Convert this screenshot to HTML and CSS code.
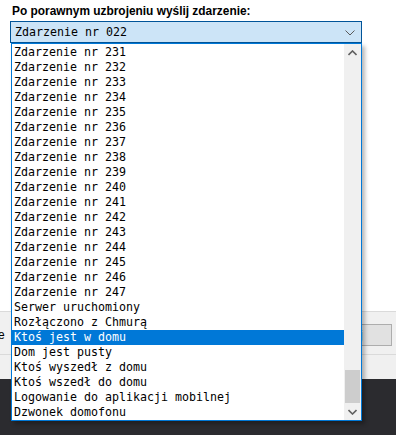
FILE: index.html
```html
<!DOCTYPE html>
<html lang="pl">
<head>
<meta charset="utf-8">
<title>Zdarzenie</title>
<link rel="stylesheet" href="styles.css">
</head>
<body>
<div class="page">
  <div class="form">
    <div class="title">Po porawnym uzbrojeniu wyślij zdarzenie:</div>
    <div class="combo">
      <div class="select">
        <span class="value">Zdarzenie nr 022</span>
        <svg class="chev" width="10" height="6" viewBox="0 0 10 6"><path d="M0.5 0.5 L5 5 L9.5 0.5" fill="none" stroke="#5a5a5a" stroke-width="1"/></svg>
      </div>
      <div class="dropdown">
        <ul class="options">
          <li>Zdarzenie nr 231</li>
          <li>Zdarzenie nr 232</li>
          <li>Zdarzenie nr 233</li>
          <li>Zdarzenie nr 234</li>
          <li>Zdarzenie nr 235</li>
          <li>Zdarzenie nr 236</li>
          <li>Zdarzenie nr 237</li>
          <li>Zdarzenie nr 238</li>
          <li>Zdarzenie nr 239</li>
          <li>Zdarzenie nr 240</li>
          <li>Zdarzenie nr 241</li>
          <li>Zdarzenie nr 242</li>
          <li>Zdarzenie nr 243</li>
          <li>Zdarzenie nr 244</li>
          <li>Zdarzenie nr 245</li>
          <li>Zdarzenie nr 246</li>
          <li>Zdarzenie nr 247</li>
          <li>Serwer uruchomiony</li>
          <li>Rozłączono z Chmurą</li>
          <li class="selected">Ktoś jest w domu</li>
          <li>Dom jest pusty</li>
          <li>Ktoś wyszedł z domu</li>
          <li>Ktoś wszedł do domu</li>
          <li>Logowanie do aplikacji mobilnej</li>
          <li>Dzwonek domofonu</li>
        </ul>
        <div class="scrollbar">
          <div class="sb-btn">
            <svg width="9" height="6" viewBox="0 0 9 6"><path d="M0.5 5 L4.5 1 L8.5 5" fill="none" stroke="#606060" stroke-width="1.6"/></svg>
          </div>
          <div class="sb-track"><div class="sb-thumb"></div></div>
          <div class="sb-btn">
            <svg width="9" height="6" viewBox="0 0 9 6"><path d="M0.5 1 L4.5 5 L8.5 1" fill="none" stroke="#606060" stroke-width="1.6"/></svg>
          </div>
        </div>
      </div>
    </div>
  </div>
  <div class="footer">
    <div class="footer-row">
      <span class="footer-label">Zapisz zmiany w strefie</span>
      <button class="btn">Anuluj</button>
    </div>
    <div class="footer-line"></div>
  </div>
  <div class="taskbar"></div>
</div>
</body>
</html>
```
FILE: styles.css
```css
* { box-sizing: border-box; }
html, body { margin: 0; padding: 0; }
body {
  width: 396px;
  height: 435px;
  overflow: hidden;
  background: #ffffff;
  font-family: "Liberation Sans", Arial, sans-serif;
}
.page {
  display: flex;
  flex-direction: column;
  height: 435px;
}
.form {
  height: 311px;
  padding: 4px 35px 0 10px;
  background: #ffffff;
}
.title {
  font-weight: bold;
  font-size: 11.9px;
  line-height: 14px;
  padding-left: 2px;
  color: #000;
  height: 17px;
}
.combo {
  position: relative;
  width: 352px;
}
.select {
  height: 22px;
  border: 1px solid #005499;
  background: #cce4f7;
  display: flex;
  align-items: center;
  justify-content: space-between;
  padding: 0 6px 0 4px;
}
.value, .options li {
  font-family: "DejaVu Sans Mono", "Liberation Mono", monospace;
  font-size: 11.63px;
  color: #000;
}
.chev { display: block; margin-top: 1px; }
.dropdown {
  position: absolute;
  left: 1px;
  top: 22px;
  width: 351px;
  height: 378px;
  border: 1px solid #0078d7;
  background: #fff;
  display: flex;
  box-shadow: 3px 3px 4px rgba(0, 0, 0, 0.28);
  z-index: 5;
}
.options {
  list-style: none;
  margin: 0;
  padding: 1px 0 0 0;
  flex: 1;
}
.options li {
  height: 15px;
  line-height: 15px;
  padding-left: 2px;
  white-space: nowrap;
}
.options li.selected {
  background: #0078d7;
  color: #fff;
}
.scrollbar {
  width: 17px;
  background: #f0f0f0;
  display: flex;
  flex-direction: column;
}
.sb-btn {
  height: 17px;
  display: flex;
  align-items: center;
  justify-content: center;
}
.sb-btn svg { display: block; }
.sb-track {
  flex: 1;
  display: flex;
  flex-direction: column;
  justify-content: flex-end;
}
.sb-thumb {
  height: 33px;
  margin: 0 1px;
  background: #cdcdcd;
}
.footer {
  height: 68px;
  background: #f0f0f0;
  border-top: 1px solid #dadada;
  padding-top: 12px;
}
.footer-row {
  display: flex;
  justify-content: space-between;
  align-items: center;
  padding: 0 4px 0 0;
  margin-left: -120px;
}
.footer-label {
  font-family: "Liberation Sans", Arial, sans-serif;
  font-size: 12px;
  color: #000;
}
.btn {
  width: 92px;
  height: 22px;
  background: #e1e1e1;
  border: 1px solid #adadad;
  font-family: "Liberation Sans", Arial, sans-serif;
  font-size: 12px;
  color: #000;
  padding: 0;
}
.footer-line {
  margin-top: 8px;
  height: 1px;
  background: #dadada;
}
.taskbar {
  flex: 1;
  background: #2b2b2f;
}
```
